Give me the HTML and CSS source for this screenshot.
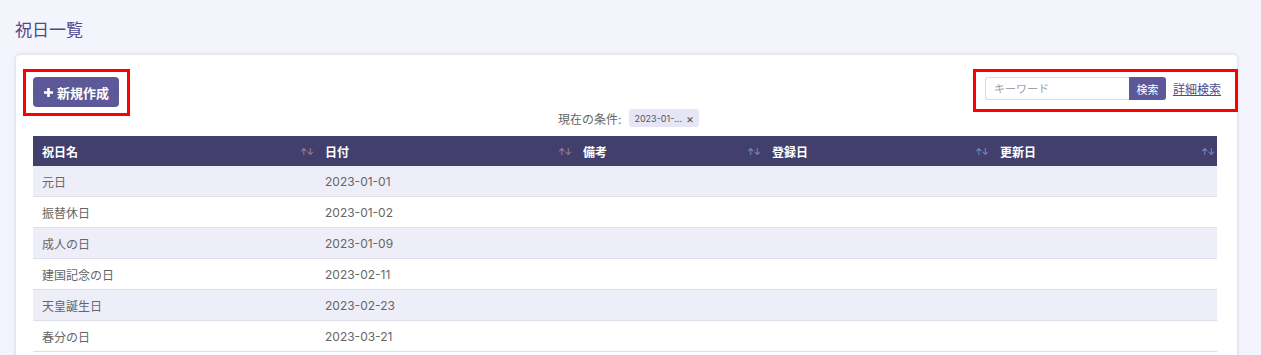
FILE: index.html
```html
<!DOCTYPE html>
<html lang="ja">
<head>
    <meta charset="UTF-8">
    <meta name="viewport" content="width=device-width, initial-scale=1.0">
    <title>祝日一覧</title>
    <link rel="stylesheet" href="styles.css">
</head>
<body>
    <h1 class="page-title">祝日一覧</h1>

    <div class="card">
        <div class="toolbar">
            <div class="mark">
                <button class="new-btn">
                    <svg width="11" height="11" viewBox="0 0 11 11"><path d="M5.5 1v9M1 5.5h9" stroke="#fff" stroke-width="2.6"/></svg>
                    新規作成
                </button>
            </div>

            <div class="conditions">
                <span class="cond-label">現在の条件:</span>
                <span class="chip">2023-01-... <span class="chip-x">×</span></span>
            </div>

            <div class="mark mark-search">
                <input type="text" class="search-input" placeholder="キーワード">
                <button class="search-btn">検索</button>
                <a href="#" class="detail-link">詳細検索</a>
            </div>
        </div>

        <table class="holiday-table">
            <colgroup>
                <col style="width: 283px">
                <col style="width: 258px">
                <col style="width: 189px">
                <col style="width: 228px">
                <col style="width: 226px">
            </colgroup>
            <thead>
                <tr>
                    <th>祝日名<span class="sort">↑↓</span></th>
                    <th>日付<span class="sort">↑↓</span></th>
                    <th>備考<span class="sort">↑↓</span></th>
                    <th>登録日<span class="sort">↑↓</span></th>
                    <th>更新日<span class="sort">↑↓</span></th>
                </tr>
            </thead>
            <tbody>
                <tr><td>元日</td><td>2023-01-01</td><td></td><td></td><td></td></tr>
                <tr><td>振替休日</td><td>2023-01-02</td><td></td><td></td><td></td></tr>
                <tr><td>成人の日</td><td>2023-01-09</td><td></td><td></td><td></td></tr>
                <tr><td>建国記念の日</td><td>2023-02-11</td><td></td><td></td><td></td></tr>
                <tr><td>天皇誕生日</td><td>2023-02-23</td><td></td><td></td><td></td></tr>
                <tr><td>春分の日</td><td>2023-03-21</td><td></td><td></td><td></td></tr>
            </tbody>
        </table>
    </div>
</body>
</html>
```

FILE: styles.css
```css
body {
    font-family: Inter, "Noto Sans CJK JP", sans-serif;
    margin: 0;
    padding: 0;
    background: #f4f4fc;
    color: #666;
}

.page-title {
    margin: 0;
    padding: 18px 0 0 15px;
    font-size: 17px;
    font-weight: 400;
    line-height: 24px;
    color: #4d4b8f;
}

.card {
    margin: 13px 24px 0 16px;
    padding-top: 14px;
    background: white;
    border-radius: 4px;
    box-shadow: 0 0 4px rgba(60, 60, 120, 0.18);
    height: 300px;
}

.toolbar {
    display: grid;
    grid-template-columns: 1fr auto 1fr;
    align-items: start;
    padding-left: 7px;
}

.mark {
    border: 3px solid #f00;
    padding: 5px 8px 6px 7px;
    justify-self: start;
}

.mark-search {
    justify-self: end;
    display: flex;
    align-items: center;
    padding: 5px 14px 9px 9px;
    margin-right: -1px;
}

.new-btn {
    display: flex;
    align-items: center;
    gap: 3px;
    height: 30px;
    width: 86px;
    padding: 0 0 0 10px;
    background: #5d5998;
    color: white;
    border: none;
    border-radius: 4px;
    font-family: inherit;
    font-size: 13px;
    font-weight: 700;
}

.conditions {
    padding-top: 40px;
    margin-left: -3px;
    display: flex;
    align-items: center;
    gap: 8px;
    font-size: 12px;
}

.chip {
    display: inline-flex;
    align-items: center;
    gap: 4px;
    height: 18px;
    padding: 0 5px;
    background: #e5e5f6;
    border-radius: 3px;
    font-size: 9px;
    color: #555;
}

.chip-x {
    font-size: 12px;
}

.search-input {
    width: 144px;
    height: 23px;
    box-sizing: border-box;
    padding: 0 8px;
    border: 1px solid #dcdce6;
    border-right: none;
    border-radius: 3px 0 0 3px;
    font-family: inherit;
    font-size: 11px;
}

.search-input::placeholder {
    color: #a0a0a8;
}

.search-btn {
    width: 37px;
    height: 23px;
    padding: 0;
    background: #5d5998;
    color: white;
    border: none;
    border-radius: 0 3px 3px 0;
    font-family: inherit;
    font-size: 11px;
}

.detail-link {
    margin-left: 7px;
    color: #4d4b8f;
    font-size: 12px;
    text-decoration: underline;
}

.holiday-table {
    margin: 9px 0 0 17px;
    width: 1184px;
    border-collapse: collapse;
    table-layout: fixed;
    font-size: 12px;
}

.holiday-table th {
    position: relative;
    height: 30px;
    padding: 0 9px;
    background: #423f6c;
    color: white;
    text-align: left;
    font-weight: 700;
    font-size: 12px;
}

.sort {
    position: absolute;
    right: 3px;
    top: 10px;
    font-size: 9px;
    font-weight: 400;
    color: #9896ba;
    letter-spacing: -1px;
}

.holiday-table td {
    height: 30px;
    padding: 0 9px;
    border-bottom: 1px solid #dedee8;
    color: #666;
}

.holiday-table tbody tr:nth-child(odd) td {
    background: #eeeef8;
}
```
